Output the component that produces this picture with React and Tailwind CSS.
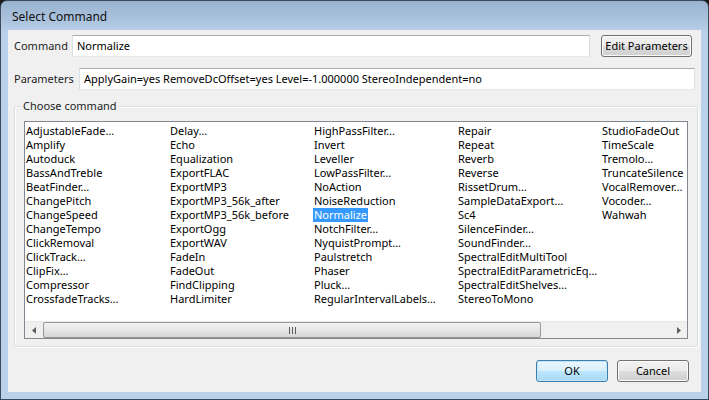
import React from 'react';

const columns = [
  ['AdjustableFade…', 'Amplify', 'Autoduck', 'BassAndTreble', 'BeatFinder…', 'ChangePitch', 'ChangeSpeed', 'ChangeTempo', 'ClickRemoval', 'ClickTrack…', 'ClipFix…', 'Compressor', 'CrossfadeTracks…'],
  ['Delay…', 'Echo', 'Equalization', 'ExportFLAC', 'ExportMP3', 'ExportMP3_56k_after', 'ExportMP3_56k_before', 'ExportOgg', 'ExportWAV', 'FadeIn', 'FadeOut', 'FindClipping', 'HardLimiter'],
  ['HighPassFilter…', 'Invert', 'Leveller', 'LowPassFilter…', 'NoAction', 'NoiseReduction', 'Normalize', 'NotchFilter…', 'NyquistPrompt…', 'Paulstretch', 'Phaser', 'Pluck…', 'RegularIntervalLabels…'],
  ['Repair', 'Repeat', 'Reverb', 'Reverse', 'RissetDrum…', 'SampleDataExport…', 'Sc4', 'SilenceFinder…', 'SoundFinder…', 'SpectralEditMultiTool', 'SpectralEditParametricEq…', 'SpectralEditShelves…', 'StereoToMono'],
  ['StudioFadeOut', 'TimeScale', 'Tremolo…', 'TruncateSilence', 'VocalRemover…', 'Vocoder…', 'Wahwah'],
];

const selected = 'Normalize';

const TextBox = ({ value, className }) => (
  <div
    className={`h-[22px] shrink-0 bg-white border border-t-[#abadb3] border-x-[#dbdfe6] border-b-[#e3e9ef] px-[4px] leading-[19px] whitespace-nowrap overflow-hidden ${className}`}
  >
    {value}
  </div>
);

const Button = ({ children, isDefault, className }) => (
  <div
    className={`h-[22px] shrink-0 whitespace-nowrap rounded-[3px] border flex items-center justify-center ${
      isDefault
        ? 'border-[#3c7fb1] bg-[linear-gradient(#eaf6fd_0%,#d9f0fc_50%,#bee6fd_51%,#a7d9f5_100%)] shadow-[inset_0_0_0_1px_#c4e5f6]'
        : 'border-[#707070] bg-[linear-gradient(#f2f2f2_0%,#ebebeb_50%,#dddddd_51%,#cfcfcf_100%)] shadow-[inset_0_0_0_1px_#fcfcfc]'
    } ${className}`}
  >
    {children}
  </div>
);

export default function App() {
  return (
    <div
      className="w-[709px] h-[400px] bg-[#1a1a1a] text-[11px] text-black"
      style={{ fontFamily: '"Noto Sans", "Open Sans", sans-serif' }}
    >
      <div className="w-full h-full rounded-t-[7px] border border-[#3a4a5c] bg-[linear-gradient(#9ab3cf_0px,#abc3dd_20px,#b9d1ea_32px,#b9d1ea_100%)] flex flex-col">
        {/* title bar */}
        <div className="h-[29px] flex items-center pl-[11px] pt-[3px] text-[12px] text-[#111]">Select Command</div>

        {/* client area */}
        <div className="mx-[7px] mb-[7px] flex-1 bg-[#f0f0f0] flex flex-col pt-[5px] pl-[6px]">
          <div className="flex items-center h-[22px]">
            <span className="w-[58px] shrink-0 text-[#1e1e1e]">Command</span>
            <TextBox value="Normalize" className="w-[518px]" />
            <Button className="ml-[11px] w-[91px]">Edit Parameters</Button>
          </div>

          <div className="flex items-center h-[22px] mt-[11px]">
            <span className="w-[65px] shrink-0 text-[#1e1e1e]">Parameters</span>
            <TextBox value="ApplyGain=yes RemoveDcOffset=yes Level=-1.000000 StereoIndependent=no" className="w-[616px]" />
          </div>

          {/* group box */}
          <div className="mt-[16px] w-[684px] h-[241px] border border-[#d5dfe5] shadow-[inset_1px_1px_0_#ffffff,1px_1px_0_#ffffff] rounded-[2px] relative pt-[14px] px-[9px]">
            <span className="absolute left-[6px] top-[-9px] bg-[#f0f0f0] px-[2px] leading-[16px] text-[#1e1e1e]">Choose command</span>
            <div className="h-[218px] bg-white border border-[#828790] flex flex-col">
              <div className="flex-1 overflow-hidden flex pt-[2px]">
                {columns.map((col, i) => (
                  <div key={i} className="w-[144px] shrink-0 flex flex-col">
                    {col.map((item) => (
                      <div key={item} className="h-[14px] leading-[14px] whitespace-nowrap">
                        <span
                          className={`inline-block h-[14px] leading-[14px] px-[1px] ${
                            item === selected ? 'bg-[#3399ff] text-white' : ''
                          }`}
                        >
                          {item}
                        </span>
                      </div>
                    ))}
                  </div>
                ))}
              </div>

              {/* horizontal scrollbar */}
              <div className="h-[17px] bg-[#f0f0f0] border-t border-[#e8e8e8] flex items-center">
                <div className="w-[17px] h-[17px] flex items-center justify-center">
                  <svg width="4" height="7" viewBox="0 0 4 7"><path d="M4 0 L0 3.5 L4 7 Z" fill="#606060" /></svg>
                </div>
                <div className="ml-[1px] w-[498px] h-[16px] rounded-[2px] border border-[#979797] bg-[linear-gradient(#f3f3f3,#e6e6e6_50%,#d6d6d6)] flex items-center justify-center">
                  <svg width="7" height="7" viewBox="0 0 7 7">
                    <path d="M0.5 0 V7 M3.5 0 V7 M6.5 0 V7" stroke="#5a5a5a" strokeWidth="1" />
                  </svg>
                </div>
                <div className="flex-1" />
                <div className="w-[17px] h-[17px] flex items-center justify-center">
                  <svg width="4" height="7" viewBox="0 0 4 7"><path d="M0 0 L4 3.5 L0 7 Z" fill="#606060" /></svg>
                </div>
              </div>
            </div>
          </div>

          <div className="flex justify-end mt-[13px] pr-[12px]">
            <Button isDefault className="w-[72px]">OK</Button>
            <Button className="ml-[9px] w-[72px]">Cancel</Button>
          </div>
        </div>
      </div>
    </div>
  );
}
